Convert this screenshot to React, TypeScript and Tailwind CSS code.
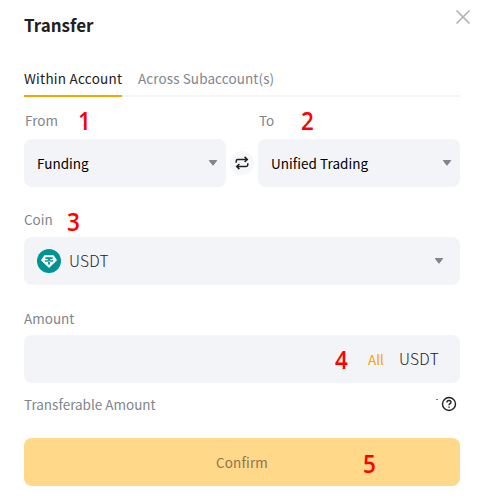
import type { ReactNode } from "react";

function Caret() {
  return (
    <svg width="10" height="8" viewBox="0 0 10 8" className="shrink-0">
      <path d="M1.3 1.5H8.7L5 6.3Z" fill="#81858c" stroke="#81858c" strokeWidth="1" strokeLinejoin="round" />
    </svg>
  );
}

function Step({ n, className = "" }: { n: number; className?: string }) {
  return (
    <span className={`font-['Open_Sans',sans-serif] text-[25px] leading-6 font-semibold text-[#ff0000] ${className}`}>
      <span className="inline-block w-[14px] origin-left scale-x-90 text-center">{n}</span>
    </span>
  );
}

function Field({ children, className = "" }: { children: ReactNode; className?: string }) {
  return <div className={`flex h-12 items-center rounded-lg bg-[#f3f4f7] ${className}`}>{children}</div>;
}

function SwapIcon() {
  return (
    <svg width="14" height="14" viewBox="0 0 14 14" fill="none" stroke="#1e2023" strokeWidth="1.5">
      <path d="M1.2 6.8V5.2Q1.2 3.5 2.9 3.5H12M9.6 .9L12.3 3.5L9.6 6M12.8 7.2V8.8Q12.8 10.5 11.1 10.5H2M4.4 8L1.7 10.5L4.4 13.1" />
    </svg>
  );
}

function TetherIcon() {
  return (
    <svg width="24" height="24" viewBox="0 0 24 24">
      <circle cx="12" cy="12" r="12" fill="#009393" />
      <path d="M7.3 6.2H16.7L20 11.3L12 18.9L4 11.3Z" fill="#fff" />
      <path d="M8.4 8.2H15.6V9.9H12.9V10.8C15 10.9 16.4 11.3 16.4 11.9S15 12.9 12.9 13V15.5H11.1V13C9 12.9 7.6 12.5 7.6 11.9S9 10.9 11.1 10.8V9.9H8.4Z" fill="#009393" />
      <path d="M8.7 11.8Q12 13 15.3 11.8" fill="none" stroke="#fff" strokeWidth=".6" />
    </svg>
  );
}

export default function App() {
  return (
    <div className="relative h-[498px] w-[481px] overflow-hidden bg-white px-6 pr-[21px] font-['Noto_Sans_CJK_SC',sans-serif] text-[13.5px] text-[#81858c]">
      <button className="absolute top-[10px] left-[456px]" aria-label="Close">
        <svg width="14" height="14" viewBox="0 0 14 14" stroke="#adb1b8" strokeWidth="1.7" strokeLinecap="round">
          <path d="M1 1L13 13M13 1L1 13" />
        </svg>
      </button>

      <h1 className="pt-[13px] text-[17px] leading-6 font-bold text-[#1e2023]">Transfer</h1>

      <div className="mt-[30px] flex h-[30px] gap-4 border-b-2 border-[#f3f4f6] leading-[22px]">
        <div className="h-[30px] w-[98px] border-b-2 border-[#f7a600] tracking-[0.25px] whitespace-nowrap text-[#1e2023]">Within Account</div>
        <div className="tracking-[0.1px] whitespace-nowrap">Across Subaccount(s)</div>
      </div>

      <div className="mt-[11px] flex h-6 items-center">
        <span className="w-[54px] pl-px">From</span>
        <Step n={1} className="w-[181px]" />
        <span className="w-[42px]">To</span>
        <Step n={2} />
      </div>
      <div className="mt-[7px] flex items-center">
        <Field className="w-[202px] justify-between pr-2 pl-[13px] text-black">
          <span>Funding</span>
          <Caret />
        </Field>
        <div className="mx-1 flex size-6 items-center justify-center rounded-full bg-[#f6f7f8]">
          <SwapIcon />
        </div>
        <Field className="w-[202px] justify-between pr-2 pl-[13px] text-black">
          <span className="tracking-[0.05px]">Unified Trading</span>
          <Caret />
        </Field>
      </div>

      <div className="mt-[21px] flex h-6 items-center">
        <span className="mb-px w-[43px]">Coin</span>
        <Step n={3} className="mt-px" />
      </div>
      <Field className="mt-[5px] pr-4 pl-[13px]">
        <TetherIcon />
        <span className="ml-2 flex-1 text-[15.5px] font-light tracking-[0.2px] text-[#1e2023]">USDT</span>
        <Caret />
      </Field>

      <div className="mt-[21px] h-6 leading-6">Amount</div>
      <Field className="mt-[5px] justify-end pr-[21px]">
        <Step n={4} className="mr-[19px]" />
        <span className="mr-[15px] text-[#f7a600]">All</span>
        <span className="text-[15.5px] font-light tracking-[0.3px] text-[#1e2023]">USDT</span>
      </Field>

      <div className="mt-[9px] flex h-6 items-center pr-[3px]">
        <span className="flex-1">Transferable Amount</span>
        <span className="mr-[3px] mb-[9px] h-px w-[2px] bg-[#777]" />
        <svg width="16" height="16" viewBox="0 0 16 16" fill="none" stroke="#1e2023" strokeWidth="1.4">
          <circle cx="8" cy="8" r="6.5" />
          <path d="M5.9 6.4C6 3.8 10 3.9 10 6.3C10 7.7 8 7.6 8 9.2" />
          <path d="M8 10.5V11.8" />
        </svg>
      </div>

      <button className="mt-[22px] flex h-12 w-[436px] items-center rounded-lg bg-[#ffd88a] text-[#8d754b]">
        <span className="ml-48 w-[147px] text-left tracking-[0.15px]">Confirm</span>
        <Step n={5} className="mt-[2px]" />
      </button>
    </div>
  );
}
